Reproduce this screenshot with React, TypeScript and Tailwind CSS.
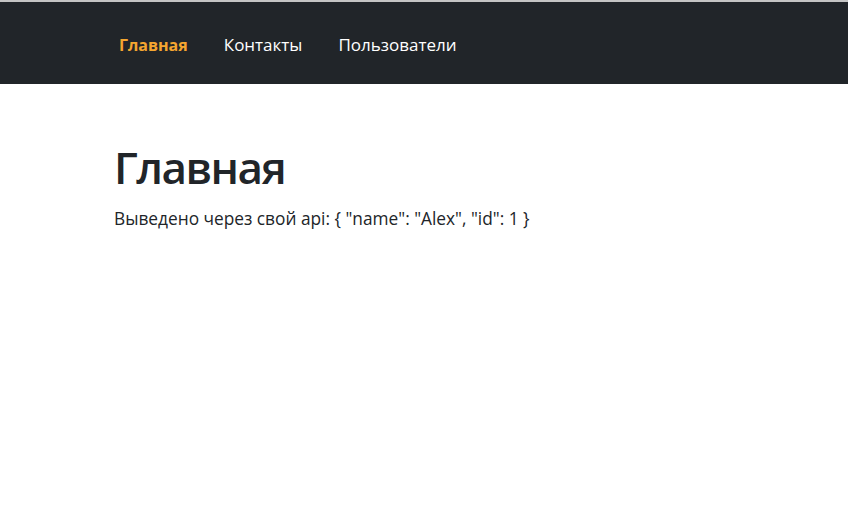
const links = [
  { label: 'Главная', active: true },
  { label: 'Контакты', active: false },
  { label: 'Пользователи', active: false },
]

export default function App() {
  return (
    <div className="min-h-screen bg-white font-['Open_Sans',sans-serif] text-[#212529]">
      {/* Header */}
      <header className="border-t-2 border-[#c4c4c4] bg-[#212529] h-[84px] flex items-center pl-[119px]">
        <nav className="flex items-center gap-[36px] pt-[3px]">
          {links.map((l) => (
            <a
              key={l.label}
              href="#"
              className={l.active ? 'text-[16px] font-bold text-[#f5a630]' : 'text-[17px] text-white'}
            >
              {l.label}
            </a>
          ))}
        </nav>
      </header>

      {/* Body */}
      <main className="pl-[114px] pt-[57px]">
        <h1 className="text-[44px] font-semibold tracking-[-1.5px] leading-[1.2] mb-[12px]">Главная</h1>
        <p className="text-[17.3px]">Выведено через свой api: {'{ "name": "Alex", "id": 1 }'}</p>
      </main>
    </div>
  )
}
